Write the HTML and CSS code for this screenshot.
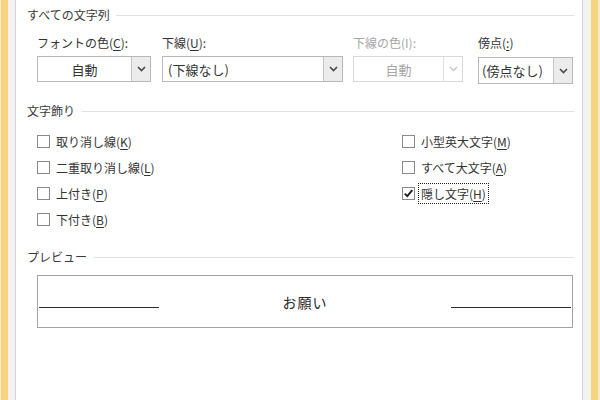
FILE: index.html
```html
<!DOCTYPE html>
<html lang="ja">
<head>
<meta charset="utf-8">
<title>フォント</title>
<link rel="stylesheet" href="styles.css">
</head>
<body>
<div class="window">
  <div class="frame frame-left"></div>
  <div class="gutter gutter-left"></div>
  <main class="content">
    <div class="group-head"><span>すべての文字列</span><span class="rule"></span></div>
    <div class="fields">
      <div class="field f-color">
        <div class="label">フォントの色(<u>C</u>):</div>
        <div class="combo">
          <div class="value center">自動</div>
          <div class="drop"><svg width="9" height="6" viewBox="0 0 9 6"><path d="M1 1 L4.5 4.5 L8 1" fill="none" stroke="#4a4a4a" stroke-width="1.6"/></svg></div>
        </div>
      </div>
      <div class="field f-under">
        <div class="label">下線(<u>U</u>):</div>
        <div class="combo">
          <div class="value">(下線なし)</div>
          <div class="drop"><svg width="9" height="6" viewBox="0 0 9 6"><path d="M1 1 L4.5 4.5 L8 1" fill="none" stroke="#4a4a4a" stroke-width="1.6"/></svg></div>
        </div>
      </div>
      <div class="field f-ucolor disabled">
        <div class="label">下線の色(I):</div>
        <div class="combo">
          <div class="value center">自動</div>
          <div class="drop"><svg width="9" height="6" viewBox="0 0 9 6"><path d="M1 1 L4.5 4.5 L8 1" fill="none" stroke="#c4c4c4" stroke-width="1.4"/></svg></div>
        </div>
      </div>
      <div class="field f-emph">
        <div class="label">傍点(<u>:</u>)</div>
        <div class="combo tall">
          <div class="value">(傍点なし)</div>
          <div class="drop"><svg width="9" height="6" viewBox="0 0 9 6"><path d="M1 1 L4.5 4.5 L8 1" fill="none" stroke="#4a4a4a" stroke-width="1.6"/></svg></div>
        </div>
      </div>
    </div>

    <div class="group-head g2"><span>文字飾り</span><span class="rule"></span></div>
    <div class="checks">
      <div class="check"><span class="box"></span><span class="ctext">取り消し線(<u>K</u>)</span></div>
      <div class="check"><span class="box"></span><span class="ctext">小型英大文字(<u>M</u>)</span></div>
      <div class="check"><span class="box"></span><span class="ctext">二重取り消し線(<u>L</u>)</span></div>
      <div class="check"><span class="box"></span><span class="ctext">すべて大文字(<u>A</u>)</span></div>
      <div class="check"><span class="box"></span><span class="ctext">上付き(<u>P</u>)</span></div>
      <div class="check"><span class="box checked"><svg width="11" height="11" viewBox="0 0 11 11"><path d="M1.8 5.6 L4.3 8.2 L9.3 2.2" fill="none" stroke="#1e1e1e" stroke-width="1.9"/></svg></span><span class="ctext focus">隠し文字(<u>H</u>)</span></div>
      <div class="check"><span class="box"></span><span class="ctext">下付き(<u>B</u>)</span></div>
    </div>

    <div class="group-head g3"><span>プレビュー</span><span class="rule"></span></div>
    <div class="preview">
      <span class="pline"></span>
      <span class="ptext">お願い</span>
      <span class="pline"></span>
    </div>
  </main>
  <div class="gutter gutter-right"></div>
  <div class="frame frame-right"></div>
</div>
</body>
</html>
```

FILE: styles.css
```css
html, body {
  margin: 0;
  padding: 0;
}
body {
  width: 600px;
  height: 400px;
  overflow: hidden;
  font-family: "Noto Sans CJK JP", "Noto Sans", sans-serif;
  font-size: 12px;
  color: #333;
  background: #fff;
}
.window {
  display: flex;
  height: 400px;
}
.frame {
  width: 7px;
  background: #f7d47e;
}
.frame-left {
  border-left: 1px solid #f5ead0;
}
.frame-right {
  border-right: 2px solid #f5ead0;
}
.gutter {
  width: 7px;
  background: #f2f2f2;
}
.gutter-left {
  border-right: 1px solid #d4d4d4;
}
.gutter-right {
  width: 8px;
  border-left: 1px solid #d4d4d4;
}
.content {
  flex: 1;
  background: #fff;
  padding: 8px 8px 0 11px;
}
.group-head {
  display: flex;
  align-items: center;
  height: 14px;
  line-height: 14px;
  color: #3a3a3a;
}
.group-head .rule {
  flex: 1;
  margin-left: 6px;
  border-top: 1px solid #e2e2e2;
}
.g2 { margin-top: 20px; }
.g3 { margin-top: 18px; }
.g2 .rule, .g3 .rule { margin-left: 7px; }

u {
  text-decoration-thickness: 1px;
  text-underline-offset: 2px;
}

.fields {
  display: flex;
  margin: 13px 0 0 10px;
}
.label {
  line-height: 16px;
  height: 16px;
  white-space: nowrap;
}
.combo {
  margin-top: 5px;
  display: flex;
  height: 26px;
  box-sizing: border-box;
  border: 1px solid #b9b9b9;
  background: #fff;
}
.combo.tall {
  margin-top: 6px;
  height: 27px;
}
.value {
  flex: 1;
  display: flex;
  align-items: center;
  padding-left: 5px;
  font-size: 13px;
  white-space: nowrap;
}
.value.center {
  justify-content: center;
  padding-left: 0;
}
.drop {
  width: 18px;
  border-left: 1px solid #c4c4c4;
  background: #ececec;
  display: flex;
  align-items: center;
  justify-content: center;
}
.f-color { width: 114px; }
.f-under { width: 181px; margin-left: 11px; }
.f-ucolor { width: 110px; margin-left: 10px; }
.f-emph { width: 95px; margin-left: 15px; }
.f-emph .value { padding-left: 3px; }
.disabled .label,
.disabled .value { color: #a6a6a6; }
.disabled .combo { border-color: #d9d9d9; }
.disabled .drop { background: #fff; border-left-color: #e2e2e2; }

.checks {
  display: grid;
  grid-template-columns: 365px 1fr;
  grid-auto-rows: 26px;
  margin: 10px 0 0 10px;
}
.check {
  display: flex;
  align-items: center;
}
.box {
  width: 13px;
  height: 13px;
  box-sizing: border-box;
  border: 1px solid #8a8a8a;
  background: #fff;
  display: flex;
  align-items: center;
  justify-content: center;
}
.ctext {
  margin-left: 3px;
  padding: 1px 2px;
  line-height: 17px;
  border: 1px solid transparent;
  white-space: nowrap;
}
.ctext.focus {
  border: 1px dotted #222;
}

.preview {
  margin: 11px 1px 0 10px;
  height: 53px;
  box-sizing: border-box;
  border: 1px solid #a3a3a3;
  display: flex;
  align-items: center;
  padding: 0 1px;
}
.pline {
  width: 120px;
  align-self: flex-end;
  margin-bottom: 19px;
  border-top: 1px solid #2e2e2e;
}
.ptext {
  flex: 1;
  text-align: center;
  font-size: 14px;
  letter-spacing: 1px;
  color: #2a2a2a;
}
```
